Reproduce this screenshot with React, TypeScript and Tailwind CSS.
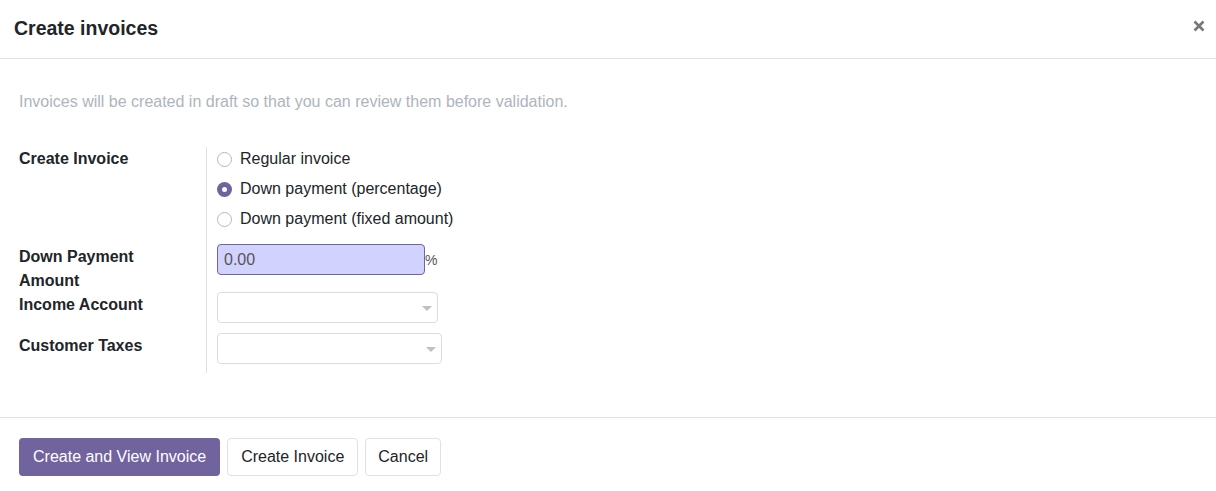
import React from "react";

function Radio({ checked, label }: { checked?: boolean; label: string }) {
  return (
    <label className="flex h-[24px] items-center gap-[8px]">
      {checked ? (
        <span className="flex h-[15px] w-[15px] items-center justify-center rounded-full bg-[#71639e]">
          <span className="h-[5px] w-[5px] rounded-full bg-white" />
        </span>
      ) : (
        <span className="h-[15px] w-[15px] rounded-full border border-[#b8b8b8] bg-white" />
      )}
      <span>{label}</span>
    </label>
  );
}

function Select({ width }: { width: string }) {
  return (
    <div
      className={`flex h-[31px] ${width} items-center justify-end rounded-[4px] border border-[#dcdcdc] bg-white pr-[5px]`}
    >
      <svg width="10" height="6" viewBox="0 0 10 6" className="mt-[2px]">
        <path d="M0 0 L10 0 L5 5 Z" fill="#c0c0c0" />
      </svg>
    </div>
  );
}

export default function App() {
  return (
    <div
      className="h-[491px] w-[1216px] overflow-hidden bg-white text-[16px] text-[#212529]"
      style={{ fontFamily: '"Liberation Sans", Arial, sans-serif' }}
    >
      <div className="flex h-[59px] items-center justify-between border-b border-[#dee2e6] pl-[14px] pr-[11px]">
        <h4 className="pb-[1px] text-[19.5px] font-bold">Create invoices</h4>
        <button className="mb-[6px] text-[#777]">
          <svg width="12" height="12" viewBox="0 0 12 12">
            <path d="M1.5 1.5 L10.5 10.5 M10.5 1.5 L1.5 10.5" stroke="currentColor" strokeWidth="2.6" />
          </svg>
        </button>
      </div>

      <div className="h-[358px] px-[19px] pt-[31px]">
        <p className="leading-[24px] text-[#adb5bd]">
          Invoices will be created in draft so that you can review them before validation.
        </p>

        <div className="mt-[33px] grid grid-cols-[187px_1fr] leading-[24px]">
          <div className="font-bold">Create Invoice</div>
          <div className="flex flex-col gap-[6px] border-l border-[#dee2e6] pb-[13px] pl-[10px]">
            <Radio label="Regular invoice" />
            <Radio checked label="Down payment (percentage)" />
            <Radio label="Down payment (fixed amount)" />
          </div>

          <div className="-mb-px w-[140px] pt-px font-bold">Down Payment Amount</div>
          <div className="flex items-start border-l border-[#dee2e6] pl-[10px]">
            <div className="flex h-[31px] w-[208px] items-center rounded-[4px] border border-[#71639e] bg-[#d2d2ff] px-[6px] pt-[1px] text-[#555]">
              0.00
            </div>
            <span className="text-[14px] leading-[32px] text-[#555]">%</span>
          </div>

          <div className="-mb-px pt-px font-bold">Income Account</div>
          <div className="border-l border-[#dee2e6] pb-[10px] pl-[10px]">
            <Select width="w-[221px]" />
          </div>

          <div className="pt-[1px] font-bold">Customer Taxes</div>
          <div className="border-l border-[#dee2e6] pb-[9px] pl-[10px]">
            <Select width="w-[225px]" />
          </div>
        </div>
      </div>

      <div className="flex gap-[7px] border-t border-[#dee2e6] px-[19px] pt-[20px]">
        <button className="h-[38px] rounded-[4px] bg-[#71639e] px-[14px] text-white">
          Create and View Invoice
        </button>
        <button className="h-[38px] rounded-[4px] border border-[#dee2e6] bg-white px-[13px]">
          Create Invoice
        </button>
        <button className="h-[38px] rounded-[4px] border border-[#dee2e6] bg-white px-[12px]">
          Cancel
        </button>
      </div>
    </div>
  );
}
